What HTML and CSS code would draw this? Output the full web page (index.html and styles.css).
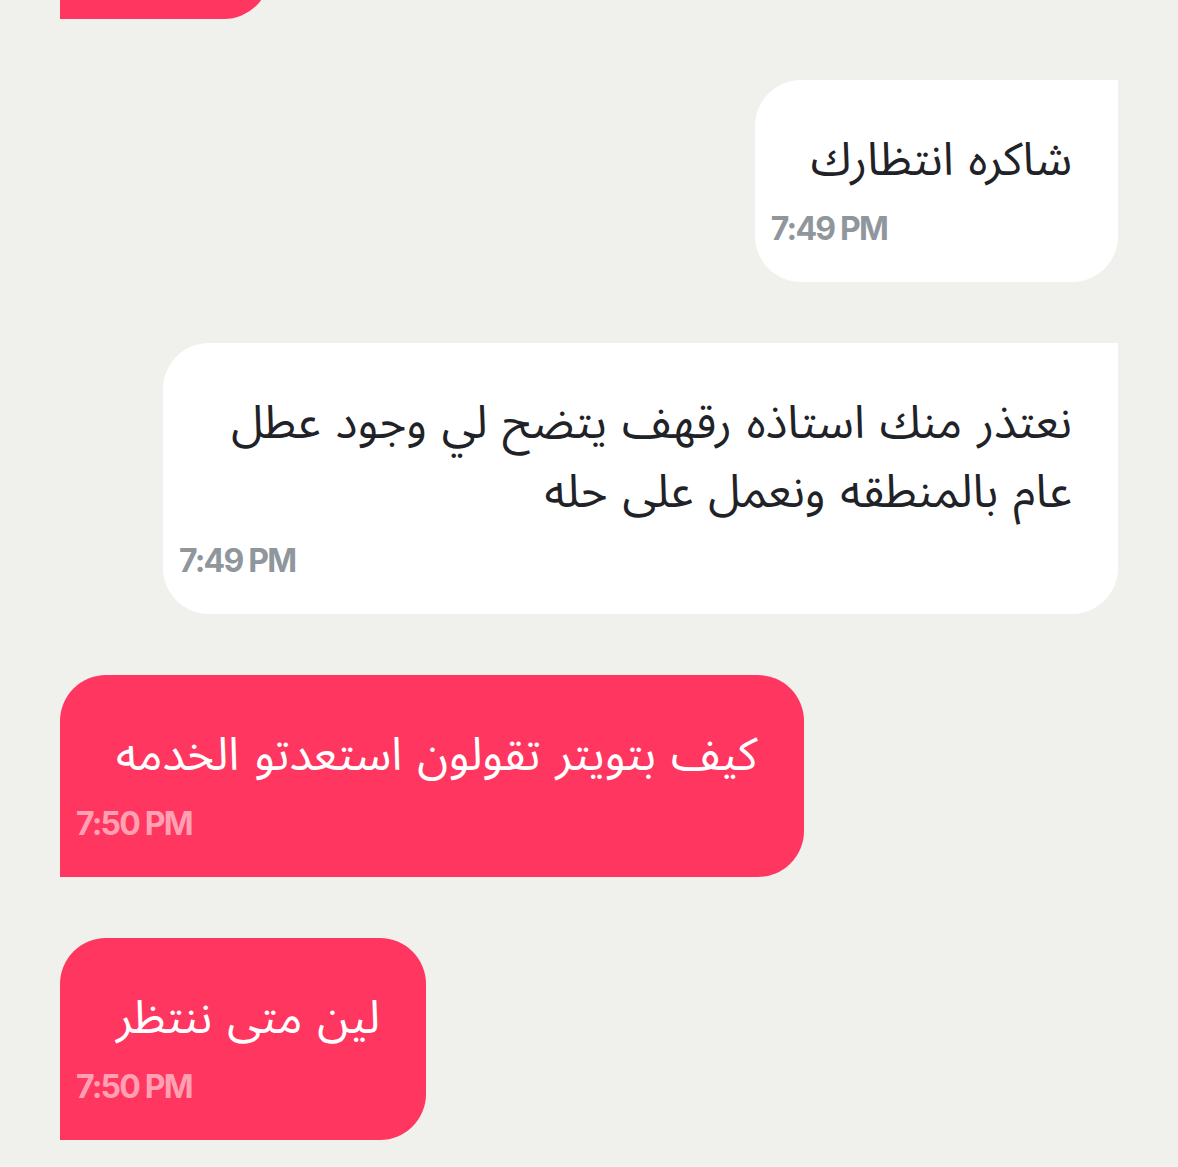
FILE: index.html
```html
<!DOCTYPE html>
<html lang="ar">
<head>
    <meta charset="UTF-8">
    <meta name="viewport" content="width=device-width, initial-scale=1.0">
    <title>Chat</title>
    <link rel="stylesheet" href="styles.css">
</head>
<body>
    <div class="chat">
        <div class="bubble them cut"></div>

        <div class="bubble me">
            <p class="msg-text" dir="rtl">شاكره انتظارك</p>
            <span class="msg-time">7:49 PM</span>
        </div>

        <div class="bubble me">
            <p class="msg-text" dir="rtl">نعتذر منك استاذه رقهف يتضح لي وجود عطل عام بالمنطقه ونعمل على حله</p>
            <span class="msg-time">7:49 PM</span>
        </div>

        <div class="bubble them">
            <p class="msg-text" dir="rtl">كيف بتويتر تقولون استعدتو الخدمه</p>
            <span class="msg-time">7:50 PM</span>
        </div>

        <div class="bubble them">
            <p class="msg-text" dir="rtl">لين متى ننتظر</p>
            <span class="msg-time">7:50 PM</span>
        </div>
    </div>
</body>
</html>
```

FILE: styles.css
```css
body {
    margin: 0;
    background-color: #f0f0ec;
    font-family: "Noto Sans Arabic", "DejaVu Sans", sans-serif;
    overflow: hidden;
}
.chat {
    display: flex;
    flex-direction: column;
    gap: 61px;
    padding: 0 60px;
}
.bubble {
    display: flex;
    flex-direction: column;
    max-width: 955px;
    box-sizing: border-box;
    padding: 46px 46px 35px 16px;
    border-radius: 46px;
}
.bubble.me {
    align-self: flex-end;
    background-color: #fff;
    color: #1f2328;
    border-top-right-radius: 0;
}
.bubble.them {
    align-self: flex-start;
    background-color: #ff3660;
    color: #fff;
    border-bottom-left-radius: 0;
}
.bubble.cut {
    width: 210px;
    height: 202px;
    margin-top: -183px;
    padding: 0;
}
.msg-text {
    margin: 0;
    padding-left: 40px;
    font-size: 46px;
    line-height: 69px;
    word-spacing: 3px;
    text-align: right;
}
.msg-time {
    margin-top: 16px;
    font-family: Inter, "Liberation Sans", sans-serif;
    font-weight: 700;
    font-size: 32px;
    line-height: 36px;
    letter-spacing: -1.8px;
    color: #8f969c;
}
.bubble.them .msg-time {
    color: #ffa0b3;
}
```
